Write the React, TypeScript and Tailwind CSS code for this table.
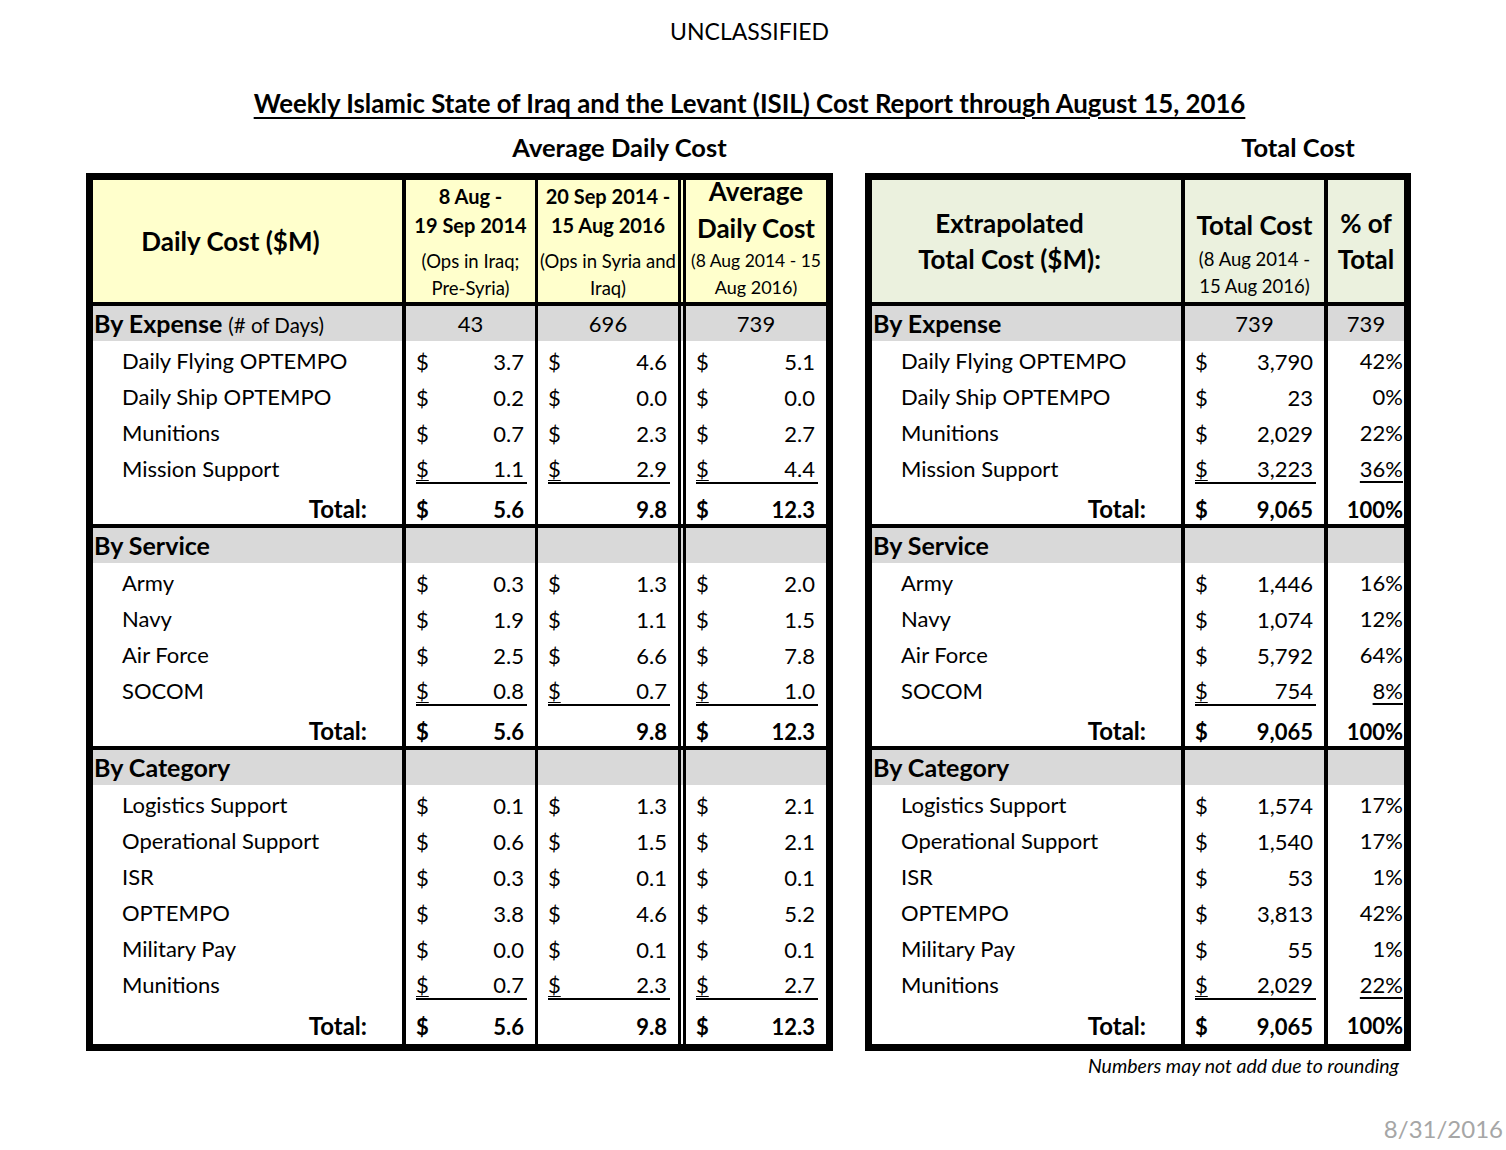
import React from 'react';

type Row = { label: string; vals: string[] };
type Section = { title: string; note?: string; head: string[]; rows: Row[]; total: string[] };

const leftSections: Section[] = [
  {
    title: 'By Expense',
    note: '(# of Days)',
    head: ['43', '696', '739'],
    rows: [
      { label: 'Daily Flying OPTEMPO', vals: ['3.7', '4.6', '5.1'] },
      { label: 'Daily Ship OPTEMPO', vals: ['0.2', '0.0', '0.0'] },
      { label: 'Munitions', vals: ['0.7', '2.3', '2.7'] },
      { label: 'Mission Support', vals: ['1.1', '2.9', '4.4'] },
    ],
    total: ['5.6', '9.8', '12.3'],
  },
  {
    title: 'By Service',
    head: ['', '', ''],
    rows: [
      { label: 'Army', vals: ['0.3', '1.3', '2.0'] },
      { label: 'Navy', vals: ['1.9', '1.1', '1.5'] },
      { label: 'Air Force', vals: ['2.5', '6.6', '7.8'] },
      { label: 'SOCOM', vals: ['0.8', '0.7', '1.0'] },
    ],
    total: ['5.6', '9.8', '12.3'],
  },
  {
    title: 'By Category',
    head: ['', '', ''],
    rows: [
      { label: 'Logistics Support', vals: ['0.1', '1.3', '2.1'] },
      { label: 'Operational Support', vals: ['0.6', '1.5', '2.1'] },
      { label: 'ISR', vals: ['0.3', '0.1', '0.1'] },
      { label: 'OPTEMPO', vals: ['3.8', '4.6', '5.2'] },
      { label: 'Military Pay', vals: ['0.0', '0.1', '0.1'] },
      { label: 'Munitions', vals: ['0.7', '2.3', '2.7'] },
    ],
    total: ['5.6', '9.8', '12.3'],
  },
];

const rightSections: Section[] = [
  {
    title: 'By Expense',
    head: ['739', '739'],
    rows: [
      { label: 'Daily Flying OPTEMPO', vals: ['3,790', '42%'] },
      { label: 'Daily Ship OPTEMPO', vals: ['23', '0%'] },
      { label: 'Munitions', vals: ['2,029', '22%'] },
      { label: 'Mission Support', vals: ['3,223', '36%'] },
    ],
    total: ['9,065', '100%'],
  },
  {
    title: 'By Service',
    head: ['', ''],
    rows: [
      { label: 'Army', vals: ['1,446', '16%'] },
      { label: 'Navy', vals: ['1,074', '12%'] },
      { label: 'Air Force', vals: ['5,792', '64%'] },
      { label: 'SOCOM', vals: ['754', '8%'] },
    ],
    total: ['9,065', '100%'],
  },
  {
    title: 'By Category',
    head: ['', ''],
    rows: [
      { label: 'Logistics Support', vals: ['1,574', '17%'] },
      { label: 'Operational Support', vals: ['1,540', '17%'] },
      { label: 'ISR', vals: ['53', '1%'] },
      { label: 'OPTEMPO', vals: ['3,813', '42%'] },
      { label: 'Military Pay', vals: ['55', '1%'] },
      { label: 'Munitions', vals: ['2,029', '22%'] },
    ],
    total: ['9,065', '100%'],
  },
];

const LEFT_GRID = 'grid grid-cols-[309px_133px_143px_148px]';
const RIGHT_GRID = 'grid grid-cols-[309px_143px_80px]';
const LEFT_BORDERS = ['', 'border-l-4 border-black', 'border-l-[3px] border-black', 'border-l-[8px] border-double border-black'];
const RIGHT_BORDERS = ['', 'border-l-4 border-black', 'border-l-4 border-black'];

function Money({ value, dollar = true, underline = false }: { value: string; dollar?: boolean; underline?: boolean }) {
  return (
    <div
      className={`ml-[10px] mr-[8px] flex h-[35px] items-center justify-between pt-[5px] ${underline ? 'border-b-2 border-black' : ''}`}
    >
      <span className={underline ? 'underline decoration-1 underline-offset-[3px]' : ''}>{dollar ? '$' : ''}</span>
      <span className="pr-[3px]">{value}</span>
    </div>
  );
}

function SectionBlock({ s, grid, borders, right, last }: { s: Section; grid: string; borders: string[]; right?: boolean; last?: boolean }) {
  const sep = last ? '' : 'border-b-4 border-black';
  return (
    <>
      <div className={`${grid} h-[35px] bg-[#d9d9d9]`}>
        <div className="flex items-baseline pl-px">
          <span className="text-[25px] font-bold leading-[34px]">{s.title}</span>
          {s.note && <span className="ml-[6px] text-[20.5px]">{s.note}</span>}
        </div>
        {s.head.map((h, i) => (
          <div key={i} className={`${borders[i + 1]} flex items-center justify-center text-[22px]`}>
            {h}
          </div>
        ))}
      </div>
      {s.rows.map((r, ri) => {
        const isLast = ri === s.rows.length - 1;
        return (
          <div key={r.label} className={`${grid} h-[36px] text-[22px]`}>
            <div className="flex items-center pl-[29px] pt-[3px]">{r.label}</div>
            {r.vals.map((v, i) =>
              right && i === 1 ? (
                <div key={i} className={`${borders[i + 1]} flex items-center justify-end pr-px pt-[3px]`}>
                  <span className={isLast ? 'underline decoration-2 underline-offset-[4px]' : ''}>{v}</span>
                </div>
              ) : (
                <div key={i} className={`${borders[i + 1]} flex items-start`}>
                  <div className="w-full">
                    <Money value={v} underline={isLast} />
                  </div>
                </div>
              ),
            )}
          </div>
        );
      })}
      <div className={`${grid} h-[43px] text-[22px] font-bold ${sep}`}>
        <div className="flex items-center justify-end pr-[35px] pt-[6px] text-[24px]">Total:</div>
        {s.total.map((v, i) =>
          right && i === 1 ? (
            <div key={i} className={`${borders[i + 1]} flex items-center justify-end pr-px pt-[6px]`}>
              {v}
            </div>
          ) : (
            <div key={i} className={`${borders[i + 1]} flex items-center pt-[2px]`}>
              <div className="w-full">
                <Money value={v} dollar={right || i !== 1} />
              </div>
            </div>
          ),
        )}
      </div>
    </>
  );
}

function LeftTable() {
  return (
    <div className="w-[747px] border-[7px] border-black">
      <div className={`${LEFT_GRID} h-[126px] border-b-4 border-black bg-[#ffffcc] text-center`}>
        <div className="flex items-center justify-center pr-[34px] text-[26px] font-bold">Daily Cost ($M)</div>
        <div className={`${LEFT_BORDERS[1]} flex flex-col items-center pt-[2px]`}>
          <div className="text-[20px] font-bold leading-[29px]">8 Aug -</div>
          <div className="text-[20px] font-bold leading-[29px]">19 Sep 2014</div>
          <div className="mt-[8px] text-[18.5px] leading-[27px]">(Ops in Iraq;</div>
          <div className="text-[18.5px] leading-[27px]">Pre-Syria)</div>
        </div>
        <div className={`${LEFT_BORDERS[2]} flex flex-col items-center pt-[2px]`}>
          <div className="whitespace-nowrap text-[20px] font-bold leading-[29px]">20 Sep 2014 -</div>
          <div className="text-[20px] font-bold leading-[29px]">15 Aug 2016</div>
          <div className="mt-[8px] whitespace-nowrap text-[18.5px] leading-[27px]">(Ops in Syria and</div>
          <div className="text-[18.5px] leading-[27px]">Iraq)</div>
        </div>
        <div className={`${LEFT_BORDERS[3]} flex flex-col items-center`}>
          <div className="-mt-[7px] text-[26px] font-bold leading-[37px]">Average</div>
          <div className="text-[26px] font-bold leading-[37px]">Daily Cost</div>
          <div className="whitespace-nowrap text-[17.5px] leading-[27px]">(8 Aug 2014 - 15</div>
          <div className="text-[18px] leading-[27px]">Aug 2016)</div>
        </div>
      </div>
      {leftSections.map((s, i) => (
        <SectionBlock key={s.title} s={s} grid={LEFT_GRID} borders={LEFT_BORDERS} last={i === leftSections.length - 1} />
      ))}
    </div>
  );
}

function RightTable() {
  return (
    <div className="w-[546px] border-[7px] border-black">
      <div className={`${RIGHT_GRID} h-[126px] border-b-4 border-black bg-[#ebf1de] text-center`}>
        <div className="flex flex-col items-center justify-center pr-[34px] text-[26px] font-bold leading-[36px]">
          <div>Extrapolated</div>
          <div>Total Cost ($M):</div>
        </div>
        <div className={`${RIGHT_BORDERS[1]} flex flex-col items-center pt-[30px]`}>
          <div className="text-[26px] font-bold leading-[30px]">Total Cost</div>
          <div className="mt-[6px] text-[18.5px] leading-[27px]">(8 Aug 2014 -</div>
          <div className="text-[18.5px] leading-[27px]">15 Aug 2016)</div>
        </div>
        <div className={`${RIGHT_BORDERS[2]} flex flex-col items-center justify-center text-[26px] font-bold leading-[36px]`}>
          <div>% of</div>
          <div>Total</div>
        </div>
      </div>
      {rightSections.map((s, i) => (
        <SectionBlock key={s.title} s={s} grid={RIGHT_GRID} borders={RIGHT_BORDERS} right last={i === rightSections.length - 1} />
      ))}
    </div>
  );
}

export default function App() {
  return (
    <div className="h-[1150px] w-[1506px] overflow-hidden bg-white text-black [font-family:Lato,'Open_Sans',sans-serif]">
      <div className="pr-[7px] pt-[16px] text-center text-[23px] leading-[30px]">UNCLASSIFIED</div>
      <div className="mt-[42px] pr-[7px] text-center text-[25.8px] font-bold leading-[30px] underline decoration-2 underline-offset-[4px]">
        Weekly Islamic State of Iraq and the Levant (ISIL) Cost Report through August 15, 2016
      </div>
      <div className="mt-[14px] flex pl-[86px] text-[25.5px] font-bold leading-[30px]">
        <div className="w-[747px] pl-[320px] text-center">Average Daily Cost</div>
        <div className="ml-[32px] w-[546px] pl-[320px] text-center">Total Cost</div>
      </div>
      <div className="mt-[11px] flex items-start gap-[32px] pl-[86px]">
        <LeftTable />
        <div className="flex flex-col">
          <RightTable />
          <div className="mt-[3px] pr-[12px] text-right text-[19.5px] italic leading-[24px]">Numbers may not add due to rounding</div>
        </div>
      </div>
      <div className="mt-[36px] pr-[3px] text-right text-[24px] leading-[30px] text-[#a6a6a6]">8/31/2016</div>
    </div>
  );
}
